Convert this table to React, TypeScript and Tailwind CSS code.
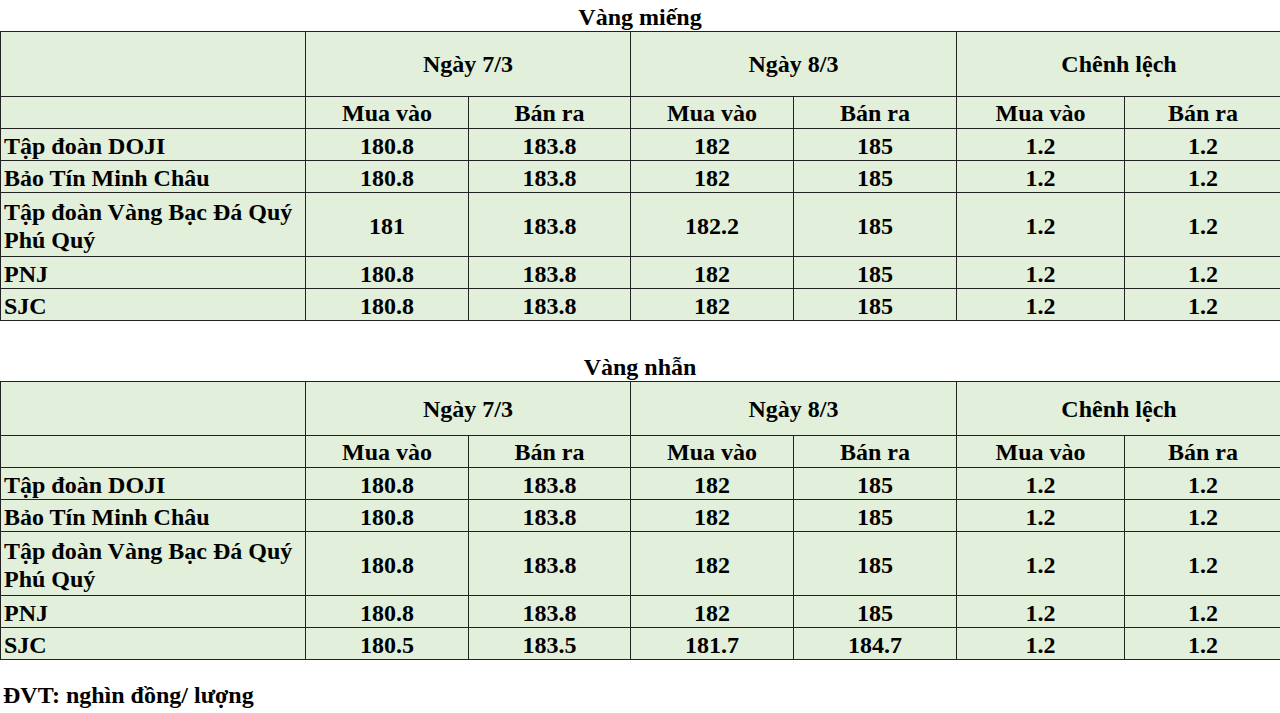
const serif = { fontFamily: '"Liberation Serif", "Times New Roman", serif' };

type Row = { name: string[]; vals: string[]; tall?: boolean };

const mieng: Row[] = [
  { name: ["Tập đoàn DOJI"], vals: ["180.8", "183.8", "182", "185", "1.2", "1.2"] },
  { name: ["Bảo Tín Minh Châu"], vals: ["180.8", "183.8", "182", "185", "1.2", "1.2"] },
  { name: ["Tập đoàn Vàng Bạc Đá Quý", "Phú Quý"], vals: ["181", "183.8", "182.2", "185", "1.2", "1.2"], tall: true },
  { name: ["PNJ"], vals: ["180.8", "183.8", "182", "185", "1.2", "1.2"] },
  { name: ["SJC"], vals: ["180.8", "183.8", "182", "185", "1.2", "1.2"] },
];

const nhan: Row[] = [
  { name: ["Tập đoàn DOJI"], vals: ["180.8", "183.8", "182", "185", "1.2", "1.2"] },
  { name: ["Bảo Tín Minh Châu"], vals: ["180.8", "183.8", "182", "185", "1.2", "1.2"] },
  { name: ["Tập đoàn Vàng Bạc Đá Quý", "Phú Quý"], vals: ["180.8", "183.8", "182", "185", "1.2", "1.2"], tall: true },
  { name: ["PNJ"], vals: ["180.8", "183.8", "182", "185", "1.2", "1.2"] },
  { name: ["SJC"], vals: ["180.5", "183.5", "181.7", "184.7", "1.2", "1.2"] },
];

function PriceTable({ title, rows, headH }: { title: string; rows: Row[]; headH: string }) {
  return (
    <div>
      <div className="h-[31px] pt-[3px] leading-[28px] text-center">{title}</div>
      <table className="table-fixed border-collapse bg-[#e2efda] w-[1281px]">
        <colgroup>
          <col className="w-[305px]" />
          <col className="w-[163px]" />
          <col className="w-[162px]" />
          <col className="w-[163px]" />
          <col className="w-[163px]" />
          <col className="w-[168px]" />
          <col className="w-[157px]" />
        </colgroup>
        <tbody>
          <tr className={headH}>
            <td className="border border-[#222]" />
            <td colSpan={2} className="border border-[#222] text-center">Ngày 7/3</td>
            <td colSpan={2} className="border border-[#222] text-center">Ngày 8/3</td>
            <td colSpan={2} className="border border-[#222] text-center">Chênh lệch</td>
          </tr>
          <tr className="h-[32px]">
            <td className="border border-[#222]" />
            {["Mua vào", "Bán ra", "Mua vào", "Bán ra", "Mua vào", "Bán ra"].map((h, i) => (
              <td key={i} className="border border-[#222] text-center pt-[2px] leading-[27px]">{h}</td>
            ))}
          </tr>
          {rows.map((r, i) => (
            <tr key={i} className={r.tall ? "h-[64px]" : "h-[32px]"}>
              <td className="border border-[#222] pl-[3px] pt-[3px] leading-[28px]">
                {r.name.map((n, j) => (
                  <div key={j}>{n}</div>
                ))}
              </td>
              {r.vals.map((v, j) => (
                <td key={j} className="border border-[#222] text-center pt-[3px] leading-[26px]">{v}</td>
              ))}
            </tr>
          ))}
        </tbody>
      </table>
    </div>
  );
}

export default function App() {
  return (
    <div
      className="w-[1280px] h-[713px] overflow-hidden bg-white text-black font-bold text-[24px]"
      style={serif}
    >
      <PriceTable title="Vàng miếng" rows={mieng} headH="h-[65px]" />
      <div className="h-[29px]" />
      <PriceTable title="Vàng nhẫn" rows={nhan} headH="h-[54px]" />
      <div className="pl-[3px] pt-[20px] leading-[31px]">ĐVT: nghìn đồng/ lượng</div>
    </div>
  );
}
